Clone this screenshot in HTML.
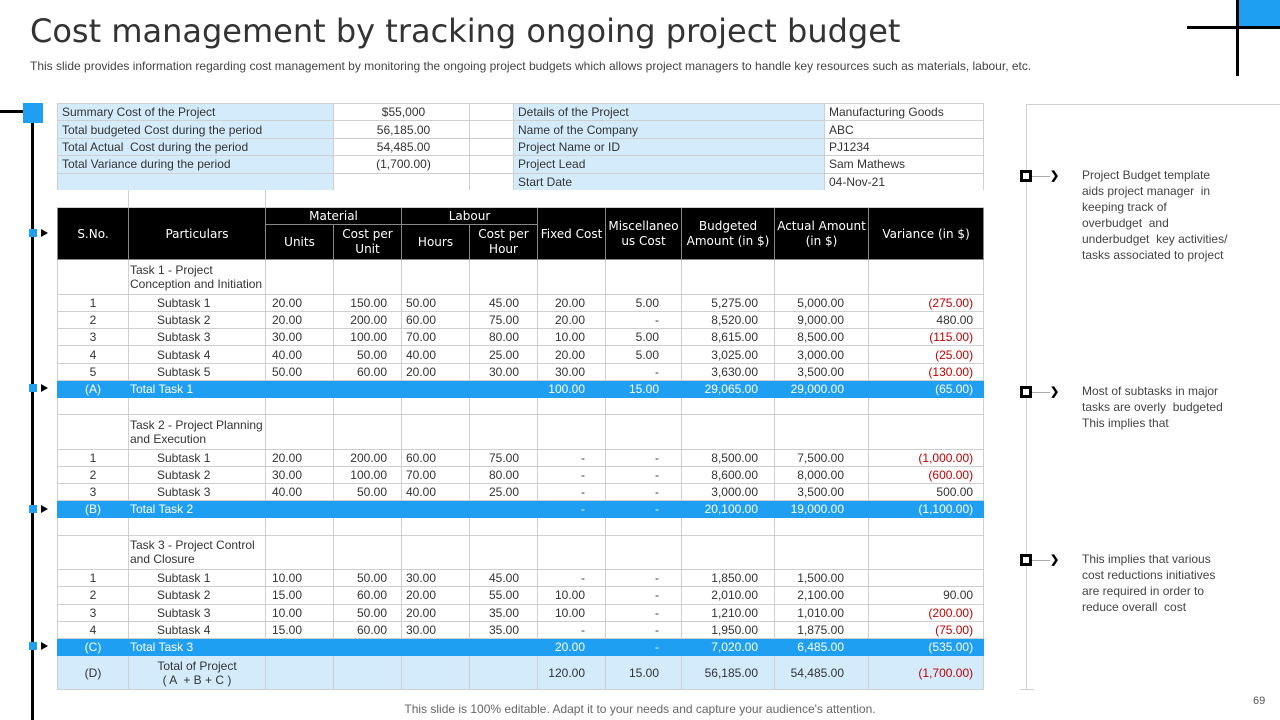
<!DOCTYPE html>
<html><head><meta charset="utf-8"><style>
*{margin:0;padding:0;box-sizing:border-box}
body{width:1280px;height:720px;background:#fff;position:relative;overflow:hidden;font-family:"Liberation Sans",Arial,sans-serif;color:#333}
.abs{position:absolute}
h1{position:absolute;left:30px;top:12px;font-family:"DejaVu Sans",Verdana,sans-serif;font-size:32px;font-weight:normal;color:#333;white-space:nowrap}
.sub{left:30px;top:59px;font-size:12px;color:#444;white-space:nowrap}
table{border-collapse:collapse;table-layout:fixed;position:absolute;left:57px;width:926px;font-size:12px}
td{border:1px solid #cfcfcf;overflow:hidden;white-space:nowrap;padding:0;line-height:14px}
#sum{top:103px}
#sum td{height:17.4px;padding-left:4px}
.lb{background:#d3ebfb}
#main{top:190px}
#main tr{height:17.2px}
#main td:nth-child(1){text-align:center}
#main td:nth-child(2){padding-left:28px}
#main td:nth-child(3){padding-left:6px}
#main td:nth-child(4){text-align:right;padding-right:14px}
#main td:nth-child(5){padding-left:4px}
#main td:nth-child(6){text-align:right;padding-right:18px}
#main td:nth-child(7){text-align:right;padding-right:20px}
#main td:nth-child(8){text-align:right;padding-right:22px}
#main td:nth-child(9){text-align:right;padding-right:16px}
#main td:nth-child(10){text-align:right;padding-right:24px}
#main td:nth-child(11){text-align:right;padding-right:10px}
#main tr.hd td{background:#000;color:#fff;text-align:center!important;padding:0!important;font-family:"DejaVu Sans",Verdana,sans-serif;font-size:12px;border-color:#888}
#main tr.task{height:34.5px}
#main tr.task td:nth-child(2){padding-left:1px;white-space:normal;line-height:14px}
#main tr.tot td{background:#1e9ff2;color:#fff;border-color:#1e9ff2}
#main tr.tot td:nth-child(2){padding-left:1px}
#main tr.d{height:34px}
#main tr.d td{background:#d3ebfb}
#main tr.d td:nth-child(2){padding-left:0;text-align:center}
.red{color:#c00000}
.mk{position:absolute;left:29px;width:8px;height:8px;background:#1e9ff2}
.tri{position:absolute;left:41px;width:0;height:0;border-left:7px solid #000;border-top:4px solid transparent;border-bottom:4px solid transparent}
.rm{position:absolute;left:1020px;width:12px;height:12px;border:3px solid #000;background:#fff}
.rl{position:absolute;left:1032px;width:18px;height:1px;background:#aaa}
.rc{position:absolute;left:1050px;font-size:11px;font-weight:bold;color:#000}
.rt{position:absolute;left:1082px;font-size:12px;line-height:16px;color:#444;width:146px}
</style></head><body>
<h1>Cost management by tracking ongoing project budget</h1>
<div class="abs sub">This slide provides information regarding cost management by monitoring the ongoing project budgets which allows project managers to handle key resources such as materials, labour, etc.</div>
<div class="abs" style="left:1238px;top:0;width:42px;height:27px;background:#1e9ff2"></div>
<div class="abs" style="left:1236px;top:0;width:3px;height:76px;background:#000"></div>
<div class="abs" style="left:1187px;top:26px;width:93px;height:3px;background:#000"></div>

<div class="abs" style="left:31px;top:110px;width:3px;height:610px;background:#000"></div>
<div class="abs" style="left:0;top:110px;width:24px;height:3px;background:#000"></div>
<div class="abs" style="left:23px;top:103px;width:20px;height:20px;background:#1e9ff2"></div>
<div class="mk" style="top:229px"></div><div class="tri" style="top:229px"></div>
<div class="mk" style="top:384px"></div><div class="tri" style="top:384px"></div>
<div class="mk" style="top:505px"></div><div class="tri" style="top:505px"></div>
<div class="mk" style="top:642px"></div><div class="tri" style="top:642px"></div>

<table id="sum">
<colgroup><col style="width:276px"><col style="width:136px"><col style="width:44px"><col style="width:311px"><col style="width:159px"></colgroup>
<tr><td class="lb">Summary Cost of the Project</td><td style="text-align:center">$55,000</td><td></td><td class="lb">Details of the Project</td><td>Manufacturing Goods</td></tr>
<tr><td class="lb">Total budgeted Cost during the period</td><td style="text-align:center">56,185.00</td><td></td><td class="lb">Name of the Company</td><td>ABC</td></tr>
<tr><td class="lb">Total Actual &nbsp;Cost during the period</td><td style="text-align:center">54,485.00</td><td></td><td class="lb">Project Name or ID</td><td>PJ1234</td></tr>
<tr><td class="lb">Total Variance during the period</td><td style="text-align:center">(1,700.00)</td><td></td><td class="lb">Project Lead</td><td>Sam Mathews</td></tr>
<tr><td class="lb"></td><td></td><td></td><td class="lb">Start Date</td><td>04-Nov-21</td></tr>
</table>

<table id="main">
<colgroup><col style="width:71px"><col style="width:137px"><col style="width:68px"><col style="width:68px"><col style="width:68px"><col style="width:68px"><col style="width:68px"><col style="width:76px"><col style="width:93px"><col style="width:94px"><col style="width:115px"></colgroup>
<tr><td style="border-left-color:#fff;border-top-color:#fff"></td><td style="border-top-color:#fff"></td><td colspan="9" style="border-top-color:#fff;border-right-color:#fff"></td></tr>
<tr class="hd"><td rowspan="2">S.No.</td><td rowspan="2">Particulars</td><td colspan="2">Material</td><td colspan="2">Labour</td><td rowspan="2">Fixed Cost</td><td rowspan="2" style="line-height:15px">Miscellaneo<br>us Cost</td><td rowspan="2" style="line-height:15px">Budgeted<br>Amount (in $)</td><td rowspan="2" style="line-height:15px">Actual Amount<br>(in $)</td><td rowspan="2">Variance (in $)</td></tr>
<tr class="hd" style="height:35px"><td>Units</td><td style="line-height:15px">Cost per<br>Unit</td><td>Hours</td><td style="line-height:15px">Cost per<br>Hour</td></tr>
<tr class="task"><td></td><td>Task 1 - Project Conception and Initiation</td><td></td><td></td><td></td><td></td><td></td><td></td><td></td><td></td><td></td></tr>
<tr><td>1</td><td>Subtask 1</td><td>20.00</td><td>150.00</td><td>50.00</td><td>45.00</td><td>20.00</td><td>5.00</td><td>5,275.00</td><td>5,000.00</td><td class="red">(275.00)</td></tr>
<tr><td>2</td><td>Subtask 2</td><td>20.00</td><td>200.00</td><td>60.00</td><td>75.00</td><td>20.00</td><td>-</td><td>8,520.00</td><td>9,000.00</td><td>480.00</td></tr>
<tr><td>3</td><td>Subtask 3</td><td>30.00</td><td>100.00</td><td>70.00</td><td>80.00</td><td>10.00</td><td>5.00</td><td>8,615.00</td><td>8,500.00</td><td class="red">(115.00)</td></tr>
<tr><td>4</td><td>Subtask 4</td><td>40.00</td><td>50.00</td><td>40.00</td><td>25.00</td><td>20.00</td><td>5.00</td><td>3,025.00</td><td>3,000.00</td><td class="red">(25.00)</td></tr>
<tr><td>5</td><td>Subtask 5</td><td>50.00</td><td>60.00</td><td>20.00</td><td>30.00</td><td>30.00</td><td>-</td><td>3,630.00</td><td>3,500.00</td><td class="red">(130.00)</td></tr>
<tr class="tot"><td>(A)</td><td>Total Task 1</td><td></td><td></td><td></td><td></td><td>100.00</td><td>15.00</td><td>29,065.00</td><td>29,000.00</td><td>(65.00)</td></tr>
<tr><td></td><td></td><td></td><td></td><td></td><td></td><td></td><td></td><td></td><td></td><td></td></tr>
<tr class="task"><td></td><td>Task 2 - Project Planning and Execution</td><td></td><td></td><td></td><td></td><td></td><td></td><td></td><td></td><td></td></tr>
<tr><td>1</td><td>Subtask 1</td><td>20.00</td><td>200.00</td><td>60.00</td><td>75.00</td><td>-</td><td>-</td><td>8,500.00</td><td>7,500.00</td><td class="red">(1,000.00)</td></tr>
<tr><td>2</td><td>Subtask 2</td><td>30.00</td><td>100.00</td><td>70.00</td><td>80.00</td><td>-</td><td>-</td><td>8,600.00</td><td>8,000.00</td><td class="red">(600.00)</td></tr>
<tr><td>3</td><td>Subtask 3</td><td>40.00</td><td>50.00</td><td>40.00</td><td>25.00</td><td>-</td><td>-</td><td>3,000.00</td><td>3,500.00</td><td>500.00</td></tr>
<tr class="tot"><td>(B)</td><td>Total Task 2</td><td></td><td></td><td></td><td></td><td>-</td><td>-</td><td>20,100.00</td><td>19,000.00</td><td>(1,100.00)</td></tr>
<tr><td></td><td></td><td></td><td></td><td></td><td></td><td></td><td></td><td></td><td></td><td></td></tr>
<tr class="task"><td></td><td>Task 3 - Project Control and Closure</td><td></td><td></td><td></td><td></td><td></td><td></td><td></td><td></td><td></td></tr>
<tr><td>1</td><td>Subtask 1</td><td>10.00</td><td>50.00</td><td>30.00</td><td>45.00</td><td>-</td><td>-</td><td>1,850.00</td><td>1,500.00</td><td></td></tr>
<tr><td>2</td><td>Subtask 2</td><td>15.00</td><td>60.00</td><td>20.00</td><td>55.00</td><td>10.00</td><td>-</td><td>2,010.00</td><td>2,100.00</td><td>90.00</td></tr>
<tr><td>3</td><td>Subtask 3</td><td>10.00</td><td>50.00</td><td>20.00</td><td>35.00</td><td>10.00</td><td>-</td><td>1,210.00</td><td>1,010.00</td><td class="red">(200.00)</td></tr>
<tr><td>4</td><td>Subtask 4</td><td>15.00</td><td>60.00</td><td>30.00</td><td>35.00</td><td>-</td><td>-</td><td>1,950.00</td><td>1,875.00</td><td class="red">(75.00)</td></tr>
<tr class="tot"><td>(C)</td><td>Total Task 3</td><td></td><td></td><td></td><td></td><td>20.00</td><td>-</td><td>7,020.00</td><td>6,485.00</td><td>(535.00)</td></tr>
<tr class="d"><td>(D)</td><td>Total of Project<br>( A &nbsp;+ B + C )</td><td></td><td></td><td></td><td></td><td>120.00</td><td>15.00</td><td>56,185.00</td><td>54,485.00</td><td class="red">(1,700.00)</td></tr>
</table>

<div class="abs" style="left:1026px;top:104px;width:254px;height:1px;background:#d0d0d0"></div>
<div class="abs" style="left:1026px;top:104px;width:1px;height:586px;background:#d0d0d0"></div>
<div class="abs" style="left:1020px;top:689px;width:14px;height:1px;background:#d0d0d0"></div>

<div class="rl" style="top:176px"></div><div class="rm" style="top:170px"></div><div class="rc" style="top:169px">&#10095;</div>
<div class="rt" style="top:167px">Project Budget template aids project manager &nbsp;in keeping track of overbudget &nbsp;and underbudget &nbsp;key activities/ tasks associated to project</div>
<div class="rl" style="top:392px"></div><div class="rm" style="top:386px"></div><div class="rc" style="top:385px">&#10095;</div>
<div class="rt" style="top:383px">Most of subtasks in major tasks are overly &nbsp;budgeted This implies that</div>
<div class="rl" style="top:560px"></div><div class="rm" style="top:554px"></div><div class="rc" style="top:553px">&#10095;</div>
<div class="rt" style="top:551px">This implies that various cost reductions initiatives are required in order to reduce overall &nbsp;cost</div>

<div class="abs" style="left:0;width:1280px;top:702px;text-align:center;font-size:12px;color:#666">This slide is 100% editable. Adapt it to your needs and capture your audience's attention.</div>
<div class="abs" style="left:1253px;top:695px;font-size:11px;color:#555">69</div>
</body></html>
